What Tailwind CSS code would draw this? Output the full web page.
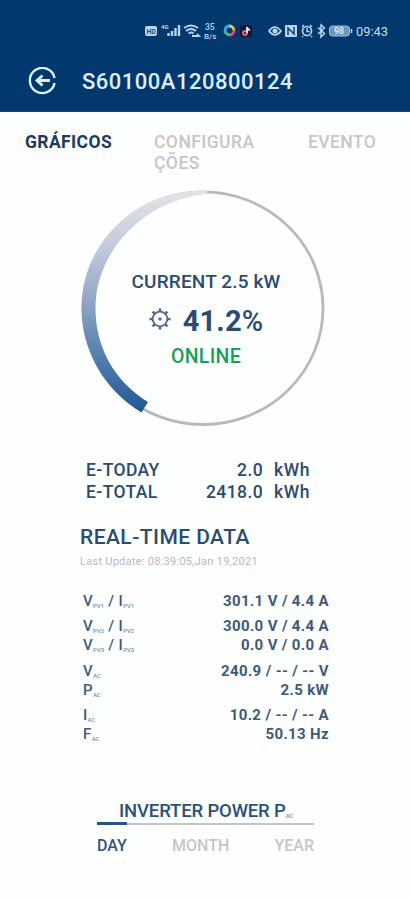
<!DOCTYPE html>
<html lang="pt">
<head>
<meta charset="utf-8">
<meta name="viewport" content="width=device-width, initial-scale=1">
<title>Inverter</title>
<script src="https://cdn.jsdelivr.net/npm/@tailwindcss/browser@4"></script>
</head>
<body class="w-[410px] h-[900px] overflow-hidden bg-[#fdfefe] font-['Roboto',sans-serif] font-medium text-[#2c4b6e]">
<header class="h-[112px] bg-[#02386e] border-b border-[#1d426b] text-[#dceefa]">
  <div class="h-[50px] pt-[22px] pl-[145px] flex items-start text-[#b9d5ed]">
    <svg class="w-[243px] h-[20px] shrink-0 overflow-visible" viewBox="0 0 243 20" fill="none" stroke="currentColor">
      <rect x="0" y="4" width="12" height="10" rx="2" fill="currentColor" stroke="none"/>
      <text x="1.500" y="11.500" font-size="7" font-weight="700" fill="#24527f" stroke="none">HD</text>
      <text x="16" y="7" font-size="6" font-weight="700" fill="currentColor" stroke="none">4G</text>
      <path d="M23.500 14v-3M27 14v-5M30.500 14v-8M34 14V3" stroke-width="2.400"/>
      <path d="M39 6q7-5 14 0M41 9q5-4 10 0M43.500 11.500q3-2 5 0M47 14h7l-2-2" stroke-width="1.800"/>
      <text x="60" y="8" font-size="8.500" fill="currentColor" stroke="none">35</text>
      <text x="59" y="17" font-size="8" fill="currentColor" stroke="none">B/s</text>
      <g stroke-width="2.800">
        <path d="M80 8a4.800 4.800 0 0 1 4-4" stroke="#39a5e6"/>
        <path d="M84 4a4.800 4.800 0 0 1 5 4" stroke="#e4c83f"/>
        <path d="M89 8a4.800 4.800 0 0 1-4 5" stroke="#e1517d"/>
        <path d="M85 13a4.800 4.800 0 0 1-5-5" stroke="#43bd83"/>
      </g>
      <rect x="95" y="3" width="12" height="12" rx="2" fill="#151932" stroke="none"/>
      <circle cx="100" cy="11" r="2" stroke="#e66482" stroke-width="2"/>
      <path d="M102 11V5q1 3 3 3" stroke="#e9dcea" stroke-width="2"/>
      <path d="M124 9q5.500-8 12 0q-6 8-12 0Z" stroke-width="1.700"/>
      <circle cx="130" cy="9" r="2.500" fill="currentColor" stroke="none"/>
      <rect x="140" y="3" width="12" height="12" rx="1" fill="currentColor" stroke="none"/>
      <path d="M143 13V6l6 6V5" stroke="#123f70" stroke-width="1.500"/>
      <circle cx="162" cy="9" r="4.500" stroke-width="1.700"/>
      <path d="M162 6v3.500h2.500M157 5l2-2M167 5l-2-2M158 14l-1 1M166 14l1 1" stroke-width="1.400"/>
      <path d="M173 5.500l6.500 6-3.500 3.500V3l3.500 3-6.500 6" stroke-width="1.500"/>
      <rect x="184.500" y="4" width="20" height="10" rx="3" fill="#6f94ba" stroke="#a4c2de"/>
      <path d="M206.500 7v4" stroke-width="1.500"/>
      <text x="189" y="12" font-size="9" fill="#e0f1ff" stroke="none">98</text>
      <text x="211" y="13.500" font-size="13" font-weight="400" textLength="32" lengthAdjust="spacingAndGlyphs" fill="#c4dff3" stroke="none">09:43</text>
    </svg>
  </div>
  <div class="h-[61px] flex items-center pl-[28px]">
    <svg class="w-[29px] h-[28px]" viewBox="0 0 29 28" fill="none" stroke="currentColor" stroke-width="2.400">
      <path d="M26.600 11a12.500 12.500 0 1 0 0 5"/>
      <path d="M22 13.500H9M14.500 8.500L9 13.500l5.500 5" stroke-width="2.800"/>
    </svg>
    <h1 class="pl-[25px] text-[22px] leading-[26px] tracking-[0.5px] pt-[2px] whitespace-nowrap">S60100A120800124</h1>
  </div>
</header>
<nav class="h-[78px] pt-[20px] px-[25px] flex text-[17.5px] leading-[21px] text-[#c5c6c8]">
  <span class="w-[129px] tracking-[0.4px] font-bold text-[#21395a]">GRÁFICOS</span>
  <span class="w-[154px] tracking-[0.45px]">CONFIGURA<br>ÇÕES</span>
  <span class="tracking-[0.4px]">EVENTO</span>
</nav>
<main>
  <section class="h-[240px] relative">
    <svg class="absolute left-0 top-0 w-[410px] h-[240px]" viewBox="0 190 410 240">
      <defs><linearGradient id="power" x1="0" y1="190" x2="0" y2="412" gradientUnits="userSpaceOnUse">
        <stop offset="0" stop-color="#e3e4e8"/><stop offset=".25" stop-color="#c5cbdc"/><stop offset=".5" stop-color="#91a5c6"/><stop offset=".75" stop-color="#557eaf"/><stop offset="1" stop-color="#215797"/>
      </linearGradient></defs>
      <ellipse cx="203" cy="308.200" rx="120" ry="116.300" fill="none" stroke="#b8b9bb" stroke-width="2.800"/>
      <path d="M207 190.500C137 189 81.500 243 81.500 308C81.500 350 104 390 141.500 412.500L148 402C114 381 95.500 347 95.500 308C95.500 252 143 200 207 194Z" fill="url(#power)"/>
    </svg>
    <div class="relative pt-[80px] w-[412px] flex flex-col items-center">
      <div class="text-[19px] leading-[24px] tracking-[0.15px]">CURRENT 2.5 kW</div>
      <div class="mt-[9px] h-[36px] flex items-center gap-[12px]">
        <svg class="w-[22px] h-[22px] mb-[5px]" viewBox="0 0 22 22" fill="none" stroke="#526b89">
          <circle cx="11" cy="11" r="7.300" stroke-width="1.800"/>
          <circle cx="11" cy="11" r="1.700" fill="#526b89" stroke="none"/>
          <path d="M11 .5v3M11 18.500v3M.5 11h3M18.500 11h3M3.600 3.600l2.100 2.100M16.300 16.300l2.100 2.100M3.600 18.400l2.100-2.100M16.300 5.700l2.100-2.100" stroke-width="2.600"/>
        </svg>
        <span class="text-[29px] leading-[34px] tracking-[0.2px] font-bold">41.2<span class="font-medium">%</span></span>
      </div>
      <div class="mt-[6px] text-[19.5px] leading-[24px] tracking-[0.3px] text-[#149f5c]">ONLINE</div>
    </div>
  </section>
  <section class="mt-[30px] pl-[86px] text-[17.5px] leading-[21.5px]">
    <div class="flex"><span class="w-[90px] tracking-[0.4px]">E-TODAY</span><span class="w-[87px] text-right tracking-[0.4px]">2.0</span><span class="ml-[11px] tracking-[0.6px]">kWh</span></div>
    <div class="flex"><span class="w-[90px] tracking-[0.4px]">E-TOTAL</span><span class="w-[87px] text-right tracking-[0.4px]">2418.0</span><span class="ml-[11px] tracking-[0.6px]">kWh</span></div>
  </section>
  <section class="pt-[21px] pl-[80px] h-[88px]">
    <h2 class="text-[21px] leading-[26px] tracking-[0.45px]">REAL-TIME DATA</h2>
    <p class="mt-[5px] text-[11px] leading-[14px] tracking-[0.27px] font-normal text-[#b5b9bf]">Last Update: 08:39:05,Jan 19,2021</p>
  </section>
  <section class="ml-[83px] w-[246px] text-[15px] leading-[20px] tracking-[0.35px] font-bold text-[#405a77] [&_sub]:text-[6px] [&_sub]:leading-none [&_sub]:font-medium [&_sub]:tracking-normal [&_sub]:bottom-[-2px] [&_sub]:text-[#8292a3]">
    <div class="flex justify-between h-[25px]"><span class="font-medium">V<sub>PV1</sub> / I<sub>PV1</sub></span><span>301.1 V / 4.4 A</span></div>
    <div class="flex justify-between h-[19px]"><span class="font-medium">V<sub>PV2</sub> / I<sub>PV2</sub></span><span>300.0 V / 4.4 A</span></div>
    <div class="flex justify-between h-[26px]"><span class="font-medium">V<sub>PV3</sub> / I<sub>PV3</sub></span><span>0.0 V / 0.0 A</span></div>
    <div class="flex justify-between h-[19px]"><span class="font-medium">V<sub>AC</sub></span><span>240.9 / -- / -- V</span></div>
    <div class="flex justify-between h-[25px]"><span class="font-medium">P<sub>AC</sub></span><span>2.5 kW</span></div>
    <div class="flex justify-between h-[19px]"><span class="font-medium">I<sub>AC</sub></span><span>10.2 / -- / -- A</span></div>
    <div class="flex justify-between h-[20px]"><span class="font-medium">F<sub>AC</sub></span><span>50.13 Hz</span></div>
  </section>
  <section class="ml-[97px] mt-[56px] w-[217px]">
    <h2 class="pl-[22px] h-[22px] text-[18.500px] leading-[22px] tracking-[-0.15px] text-[#2b5279] whitespace-nowrap">INVERTER POWER P<sub class="text-[6px] leading-none bottom-[-1px] text-[#8292a3]">AC</sub></h2>
    <div class="h-[3px] flex items-center"><span class="w-[30px] h-[3px] bg-[#245586]"></span><span class="flex-1 h-[2px] bg-[#c2c4cb]"></span></div>
    <div class="pt-[10px] flex justify-between text-[16px] leading-[22px] text-[#c5c6c8]"><span class="text-[#345675]">DAY</span><span>MONTH</span><span>YEAR</span></div>
  </section>
</main>
</body>
</html>
